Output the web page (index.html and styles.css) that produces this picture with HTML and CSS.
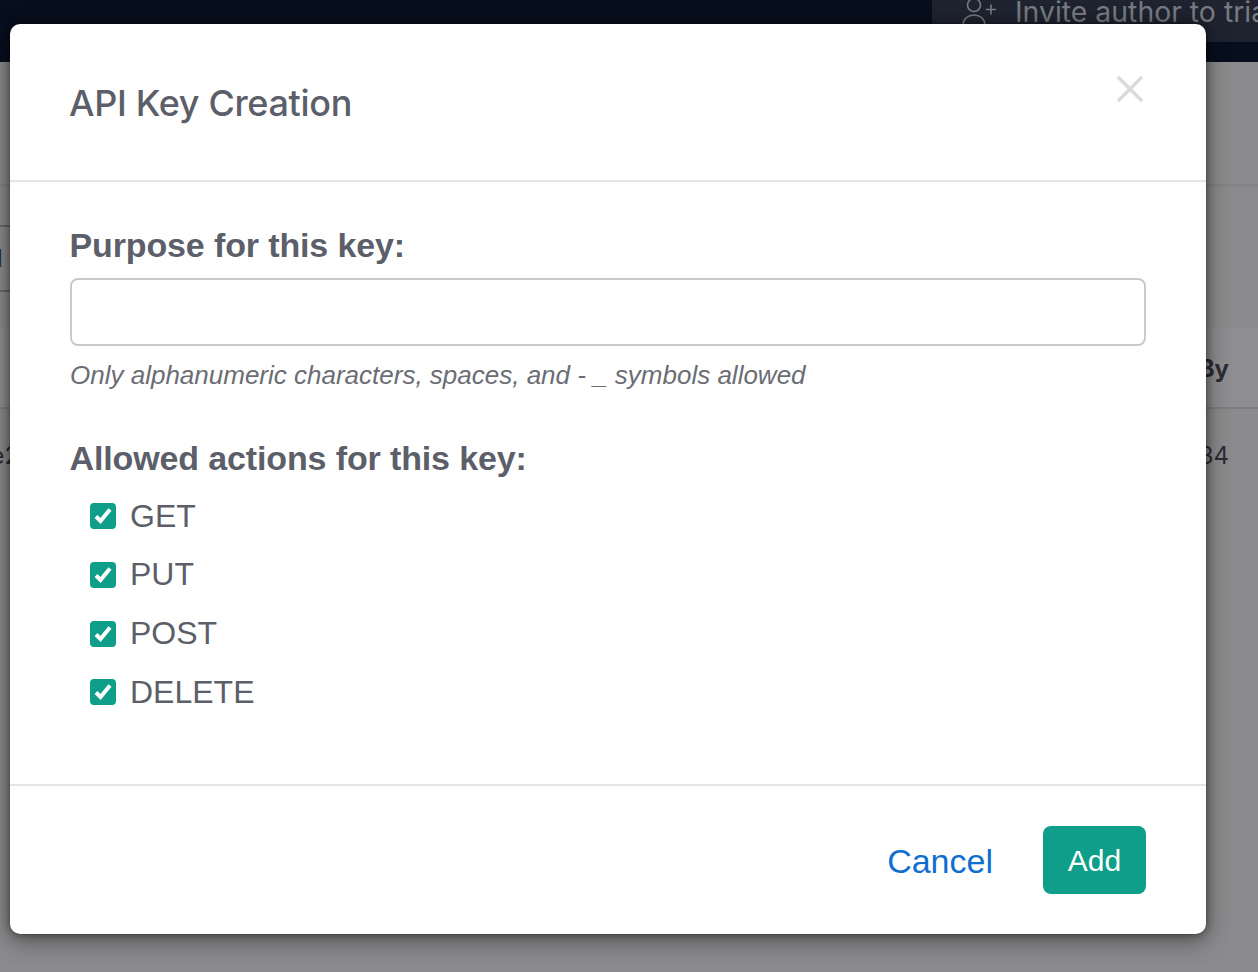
FILE: index.html
```html
<!DOCTYPE html>
<html lang="en">
<head>
<meta charset="utf-8">
<title>API Key Creation</title>
<link rel="stylesheet" href="styles.css">
</head>
<body>
<div class="page">
  <header class="topbar">
    <div class="invite">
      <svg class="invite-icon" viewBox="0 0 36 34" width="36" height="34" aria-hidden="true">
        <circle cx="12" cy="5" r="6.5"/>
        <path d="M1 32v-7c0-6 5-10 11-10s11 4 11 10v7"/>
        <path d="M24 9.500h10M29 4.500v10"/>
      </svg>
      <span class="invite-text">Invite author to trial</span>
    </div>
  </header>
  <main class="behind">
    <div class="rule"></div>
    <div class="search"><span class="search-text">l</span></div>
    <div class="thead"><span class="thead-cell">Created By</span></div>
    <div class="trow"><span class="cell-left">file2</span><span class="cell-right">1234</span></div>
  </main>
</div>
<div class="overlay">
  <section class="modal" role="dialog">
    <div class="modal-header">
      <h2 class="modal-title">API Key Creation</h2>
      <svg class="close" viewBox="0 0 28 28" width="28" height="28" aria-label="Close">
        <path d="M3 3l22 22M25 3L3 25"/>
      </svg>
    </div>
    <form class="modal-body">
      <label class="field-label" for="purpose">Purpose for this key:</label>
      <input class="field-input" id="purpose" type="text">
      <p class="hint">Only alphanumeric characters, spaces, and - _ symbols allowed</p>
      <h3 class="field-label actions-label">Allowed actions for this key:</h3>
      <ul class="checks">
        <li class="check"><span class="box"><svg viewBox="0 0 26 26" width="26" height="26"><path d="M6 13.500l4.500 4.500 9.500-11.500"/></svg></span>GET</li>
        <li class="check"><span class="box"><svg viewBox="0 0 26 26" width="26" height="26"><path d="M6 13.500l4.500 4.500 9.500-11.500"/></svg></span>PUT</li>
        <li class="check"><span class="box"><svg viewBox="0 0 26 26" width="26" height="26"><path d="M6 13.500l4.500 4.500 9.500-11.500"/></svg></span>POST</li>
        <li class="check"><span class="box"><svg viewBox="0 0 26 26" width="26" height="26"><path d="M6 13.500l4.500 4.500 9.500-11.500"/></svg></span>DELETE</li>
      </ul>
    </form>
    <div class="modal-footer">
      <a class="cancel" href="#">Cancel</a>
      <button class="add" type="button">Add</button>
    </div>
  </section>
</div>
</body>
</html>
```
FILE: styles.css
```css
* { box-sizing: border-box; }
html, body { margin: 0; height: 100%; overflow: hidden; }
body { position: relative; font-family: "Liberation Sans", Arial, sans-serif; background: #8b8b8d; color: #5c5f69; }

.page { height: 972px; display: flex; flex-direction: column; }
.topbar { height: 62px; background: #070e1d; display: flex; justify-content: flex-end; align-items: flex-start; flex: none; }
.invite { width: 326px; height: 42px; background: #1f2330; display: flex; align-items: flex-start; gap: 17px; padding-left: 30px; overflow: hidden; white-space: nowrap; color: #777a80; }
.invite-icon { fill: none; stroke: #777a80; stroke-width: 1.6; flex: none; }
.invite-text { font-family: Inter, sans-serif; font-size: 28.4px; line-height: 24px; }

.behind { flex: 1; position: relative; color: #2b2c33; font-family: Inter, sans-serif; font-size: 24px; }
.rule { position: absolute; left: 0; right: 0; top: 122px; height: 3px; background: #848486; }
.search { position: absolute; left: -60px; width: 110px; top: 163px; height: 67px; border: 2px solid #68686b; border-radius: 4px; padding: 17px 0 0 55px; }
.search-text { color: #2b2c33; }
.thead { position: absolute; left: 0; right: 0; top: 266px; height: 81px; background: #8e8e90; border-bottom: 2px solid #7e7e80; text-align: right; padding: 26px 29px 0 0; font-weight: 700; }
.trow { position: absolute; left: 0; right: 0; top: 379px; display: flex; justify-content: space-between; padding-right: 29px; }
.cell-left { margin-left: -30px; }

.overlay { position: absolute; inset: 0; padding: 24px 52px 38px 10px; }
.modal { height: 910px; background: #fff; border-radius: 10px; box-shadow: 0 6px 24px rgba(0, 0, 0, .45), 0 0 8px rgba(0, 0, 0, .4), 0 0 1px rgba(0, 0, 0, .6); display: flex; flex-direction: column; }

.modal-header { height: 158px; flex: none; border-bottom: 2px solid #e5e5e5; display: flex; justify-content: space-between; align-items: flex-start; padding: 57px 62px 0 60px; }
.modal-title { margin: 0 0 0 -1px; font-family: Inter, sans-serif; font-size: 36px; line-height: 44px; font-weight: 500; color: #5c5f69; letter-spacing: -0.34px; }
.close { fill: none; stroke: #dadada; stroke-width: 3.6; stroke-linecap: round; margin-top: -6px; }

.modal-body { flex: 1; padding: 43px 60px 0; display: flex; flex-direction: column; align-items: stretch; }
.field-label { display: block; margin: 0 0 0 -0.5px; font-size: 34px; line-height: 40px; font-weight: 700; letter-spacing: -0.13px; color: #5c5f69; }
.field-input { display: block; width: 100%; height: 68px; margin-top: 13px; border: 2px solid #cacaca; border-radius: 8px; background: #fff; }
.hint { margin: 13px 0 0; font-size: 26px; line-height: 32px; font-style: italic; color: #6b6d74; }
.actions-label { margin-top: 47px; }

.checks { list-style: none; margin: 9px 0 0; padding: 0 0 0 20px; }
.check { display: flex; align-items: center; gap: 14px; height: 58.67px; font-size: 32px; color: #5c5f69; }
.box { width: 26px; height: 26px; border-radius: 4px; background: #0e9e8a; flex: none; }
.box svg { display: block; fill: none; stroke: #fff; stroke-width: 4; }

.modal-footer { height: 150px; flex: none; border-top: 2px solid #e5e5e5; display: flex; justify-content: flex-end; align-items: center; gap: 50px; padding: 0 60px 0 0; }
.cancel { font-size: 34px; color: #0f6fd0; text-decoration: none; margin-top: 2px; }
.add { width: 103px; height: 68px; padding: 2px 0 0; border: 0; border-radius: 8px; background: #0e9e8a; color: #fff; font-family: "Liberation Sans", Arial, sans-serif; font-size: 30px; }
```
